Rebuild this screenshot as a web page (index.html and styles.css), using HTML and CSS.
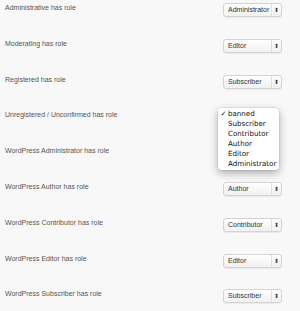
FILE: index.html
```html
<!DOCTYPE html>
<html>
<head>
<meta charset="utf-8">
<link rel="stylesheet" href="styles.css">
</head>
<body>
<div class="list">
  <div class="row"><span class="label">Administrative has role</span><span class="select"><span class="val">Administrator</span><span class="arr">⬍</span></span></div>
  <div class="row"><span class="label">Moderating has role</span><span class="select"><span class="val">Editor</span><span class="arr">⬍</span></span></div>
  <div class="row"><span class="label">Registered has role</span><span class="select"><span class="val">Subscriber</span><span class="arr">⬍</span></span></div>
  <div class="row"><span class="label">Unregistered / Unconfirmed has role</span>
    <ul class="menu">
      <li class="checked">banned</li>
      <li>Subscriber</li>
      <li>Contributor</li>
      <li>Author</li>
      <li>Editor</li>
      <li>Administrator</li>
    </ul>
  </div>
  <div class="row"><span class="label">WordPress Administrator has role</span></div>
  <div class="row"><span class="label">WordPress Author has role</span><span class="select"><span class="val">Author</span><span class="arr">⬍</span></span></div>
  <div class="row"><span class="label">WordPress Contributor has role</span><span class="select"><span class="val">Contributor</span><span class="arr">⬍</span></span></div>
  <div class="row"><span class="label">WordPress Editor has role</span><span class="select"><span class="val">Editor</span><span class="arr">⬍</span></span></div>
  <div class="row"><span class="label">WordPress Subscriber has role</span><span class="select"><span class="val">Subscriber</span><span class="arr">⬍</span></span></div>
</div>
</body>
</html>
```
FILE: styles.css
```css
html, body {
  margin: 0;
  padding: 0;
  background: #f8f8f8;
}
body {
  width: 300px;
  height: 311px;
  overflow: hidden;
  font-family: "Liberation Sans", Arial, sans-serif;
}
.list {
  padding-top: 3px;
}
.row {
  position: relative;
  height: 35.8px;
  display: flex;
  align-items: flex-start;
  justify-content: space-between;
  padding: 0 18px 0 5px;
}
.label {
  font-size: 7px;
  line-height: 9px;
  color: #555;
}
.select {
  width: 59px;
  height: 14px;
  box-sizing: border-box;
  display: flex;
  align-items: center;
  border: 1px solid #d4d4d4;
  border-radius: 3px;
  background: linear-gradient(#ffffff, #f1f1f1);
  box-shadow: 0 1px 1px rgba(0,0,0,0.06);
  font-size: 7px;
  color: #333;
}
.val {
  flex: 1;
  padding-left: 4px;
  line-height: 12px;
}
.arr {
  width: 9px;
  height: 12px;
  border-left: 1px solid #e0e0e0;
  font-size: 6px;
  line-height: 12px;
  text-align: center;
  color: #444;
}
.menu {
  position: absolute;
  left: 218px;
  top: -2.4px;
  width: 61px;
  margin: 0;
  padding: 1px 0;
  list-style: none;
  background: #fff;
  border-radius: 4px;
  box-shadow: 0 3px 8px rgba(0,0,0,0.32), 0 0 0 0.5px rgba(0,0,0,0.1);
  font-family: "DejaVu Sans", sans-serif;
  font-size: 7.1px;
  line-height: 10px;
  color: #111;
}
.menu li {
  position: relative;
  padding-left: 10px;
  white-space: nowrap;
}
.menu li.checked::before {
  content: "✓";
  position: absolute;
  left: 2.5px;
  top: 0;
  font-size: 7px;
}
```
